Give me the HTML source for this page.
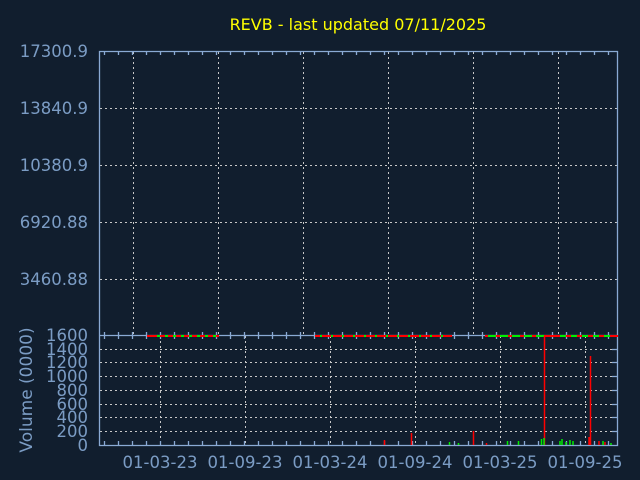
<!DOCTYPE html>
<html><head><meta charset="utf-8"><style>
html,body{margin:0;padding:0;background:#111e2e;}
svg{display:block}
text{font-family:"DejaVu Sans","Liberation Sans",sans-serif;}
</style></head><body>
<svg width="640" height="480" viewBox="0 0 640 480" xmlns="http://www.w3.org/2000/svg">
<rect width="640" height="480" fill="#111e2e"/>
<text x="358" y="30" fill="#ffff00" font-size="16" text-anchor="middle">REVB - last updated 07/11/2025</text>
<g fill="#7b9cc4" font-size="16.5" text-anchor="end">
<text x="88" y="57">17300.9</text>
<text x="88" y="114">13840.9</text>
<text x="88" y="171">10380.9</text>
<text x="88" y="228">6920.88</text>
<text x="88" y="285">3460.88</text>
<text x="88" y="341">1600</text>
<text x="88" y="355">1400</text>
<text x="88" y="368">1200</text>
<text x="88" y="382">1000</text>
<text x="88" y="396">800</text>
<text x="88" y="410">600</text>
<text x="88" y="423">400</text>
<text x="88" y="451">0</text>
<text x="88" y="437">200</text>
<text x="32" y="390" text-anchor="middle" transform="rotate(-90 32 390)" font-size="17">Volume (0000)</text>
<text x="160" y="468" text-anchor="middle">01-03-23</text>
<text x="245" y="468" text-anchor="middle">01-09-23</text>
<text x="330" y="468" text-anchor="middle">01-03-24</text>
<text x="415" y="468" text-anchor="middle">01-09-24</text>
<text x="500" y="468" text-anchor="middle">01-03-25</text>
<text x="585" y="468" text-anchor="middle">01-09-25</text>
</g>
<g stroke="#c8c8c8" stroke-width="1" stroke-dasharray="2,3" fill="none">
<path d="M133.5 52V335M218.5 52V335M303.5 52V335M388.5 52V335M473.5 52V335M558.5 52V335"/>
<path d="M100 108.5H617M100 165.5H617M100 222.5H617M100 279.5H617"/>
<path d="M160.5 336V445M245.5 336V445M330.5 336V445M415.5 336V445M500.5 336V445M585.5 336V445"/>
<path d="M100 349.5H617M100 362.5H617M100 376.5H617M100 390.5H617M100 404.5H617M100 417.5H617M100 431.5H617"/>
</g>
<g stroke="#8aaad4" stroke-width="1.3" fill="none">
<path d="M99.5 51.5H617.5V445.5H99.5Z"/>
<path d="M99.5 335.5H617.5"/>
<path d="M104.5 51V55M118.5 51V55M132.5 51V55M146.5 51V55M160.5 51V55M174.5 51V55M188.5 51V55M202.5 51V55M216.5 51V55M230.5 51V55M244.5 51V55M258.5 51V55M272.5 51V55M286.5 51V55M300.5 51V55M314.5 51V55M328.5 51V55M342.5 51V55M356.5 51V55M370.5 51V55M384.5 51V55M398.5 51V55M412.5 51V55M426.5 51V55M440.5 51V55M454.5 51V55M468.5 51V55M482.5 51V55M496.5 51V55M510.5 51V55M524.5 51V55M538.5 51V55M552.5 51V55M566.5 51V55M580.5 51V55M594.5 51V55M608.5 51V55"/>
<path d="M104.5 332V339M118.5 332V339M132.5 332V339M146.5 332V339M160.5 332V339M174.5 332V339M188.5 332V339M202.5 332V339M216.5 332V339M230.5 332V339M244.5 332V339M258.5 332V339M272.5 332V339M286.5 332V339M300.5 332V339M314.5 332V339M328.5 332V339M342.5 332V339M356.5 332V339M370.5 332V339M384.5 332V339M398.5 332V339M412.5 332V339M426.5 332V339M440.5 332V339M454.5 332V339M468.5 332V339M482.5 332V339M496.5 332V339M510.5 332V339M524.5 332V339M538.5 332V339M552.5 332V339M566.5 332V339M580.5 332V339M594.5 332V339M608.5 332V339"/>
<path d="M104.5 445V441M118.5 445V441M132.5 445V441M146.5 445V441M160.5 445V441M174.5 445V441M188.5 445V441M202.5 445V441M216.5 445V441M230.5 445V441M244.5 445V441M258.5 445V441M272.5 445V441M286.5 445V441M300.5 445V441M314.5 445V441M328.5 445V441M342.5 445V441M356.5 445V441M370.5 445V441M384.5 445V441M398.5 445V441M412.5 445V441M426.5 445V441M440.5 445V441M454.5 445V441M468.5 445V441M482.5 445V441M496.5 445V441M510.5 445V441M524.5 445V441M538.5 445V441M552.5 445V441M566.5 445V441M580.5 445V441M594.5 445V441M608.5 445V441"/>
<path d="M612 349.5H617M612 362.5H617M612 376.5H617M612 390.5H617M612 404.5H617M612 417.5H617M612 431.5H617"/>
</g>
<g stroke-width="2" fill="none">
<path d="M147 336H219" stroke="#ff0000"/>
<path d="M157 336H219" stroke="#00ee00" stroke-dasharray="3,5"/>
<path d="M315 336H452" stroke="#ff0000"/>
<path d="M320 336H452" stroke="#00ee00" stroke-dasharray="2,9"/>
<path d="M485 336H618" stroke="#ff0000"/>
<path d="M488 336H545" stroke="#00ee00" stroke-dasharray="8,4"/>
<path d="M560 336H615" stroke="#00ee00" stroke-dasharray="6,5"/>
</g>
<g stroke-width="1.5" fill="none" stroke="#ff0000">
<path d="M544.5 336V445M590.5 356V445M589 437V445M384.5 440V445M411.5 433V445M473.5 431V445M486.5 443V445M599 441V445M605 442V445"/>
</g>
<g stroke-width="1.5" fill="none" stroke="#00ee00">
<path d="M449.5 442V445M458.5 443V445M507.5 441V445M518.5 441V445M541.5 439V445M544 438V445M560 441V445M562 439V445M566 442V445M570 440V445M573 441V445M603 441V445M611 443V445"/>
</g>
</svg>
</body></html>
